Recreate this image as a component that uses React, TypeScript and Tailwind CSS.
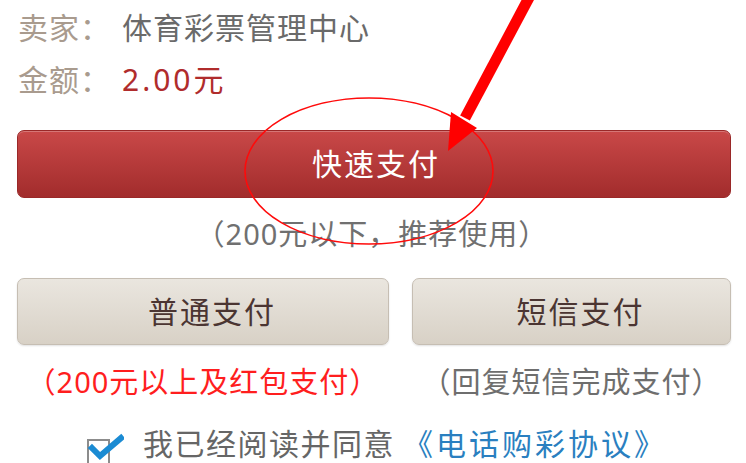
import React from "react";

const font = { fontFamily: '"Noto Sans", "Noto Sans CJK SC", sans-serif' };

export default function App() {
  return (
    <div
      className="relative w-[746px] h-[463px] overflow-hidden bg-white"
      style={font}
    >
      <div className="flex flex-col pl-[17px] pr-[15px]">
        <div className="mt-[13px] flex h-[30px] items-center text-[30px] leading-none tracking-[1px]">
          <span className="w-[105px] pl-[1px] text-[#a99b8e]">卖家：</span>
          <span className="text-[#6a6a6a]">体育彩票管理中心</span>
        </div>
        <div className="mt-[22px] flex h-[30px] items-center text-[30px] leading-none tracking-[1px]">
          <span className="w-[105px] pl-[1px] text-[#a99b8e]">金额：</span>
          <span className="text-[#b02c2c] tracking-[3px]">2.00元</span>
        </div>

        <button className="mt-[35px] flex h-[68px] w-full items-center justify-center rounded-[7px] border border-[#9a2828] bg-gradient-to-b from-[#c94848] to-[#a22c2c] pl-[4px] text-[30px] leading-none tracking-[2px] text-white shadow-[inset_0_1px_0_rgba(255,255,255,0.25)]">
          快速支付
        </button>

        <div className="mt-[20px] flex h-[30px] items-center justify-center pr-[4px] text-[29px] leading-none tracking-[1px] text-[#707070]">
          （200元以下，推荐使用）
        </div>

        <div className="mt-[30px] grid grid-cols-[372px_1fr] gap-[23px]">
          <button className="flex h-[67px] items-center justify-center rounded-[7px] border border-[#c6beb3] bg-gradient-to-b from-[#eae6df] to-[#d8d1c6] pl-[18px] text-[30px] leading-none tracking-[2px] text-[#4b3532] shadow-[0_1px_2px_rgba(0,0,0,0.12)]">
            普通支付
          </button>
          <button className="flex h-[67px] items-center justify-center rounded-[7px] border border-[#c6beb3] bg-gradient-to-b from-[#eae6df] to-[#d8d1c6] pl-[18px] text-[30px] leading-none tracking-[2px] text-[#4b3532] shadow-[0_1px_2px_rgba(0,0,0,0.12)]">
            短信支付
          </button>
        </div>

        <div className="mt-[21px] grid grid-cols-[372px_1fr] gap-[23px] text-[29px] leading-none tracking-[1px]">
          <div className="flex h-[30px] items-center justify-center text-[#ff1e1e]">
            （200元以上及红包支付）
          </div>
          <div className="flex h-[30px] items-center justify-center text-[#6e6e6e]">
            （回复短信完成支付）
          </div>
        </div>

        <div className="mt-[34px] flex h-[28px] items-center text-[30px] leading-[28px] tracking-[1px]">
          <svg
            width="38"
            height="34"
            viewBox="0 0 38 34"
            className="ml-[69px] mt-[12px] shrink-0"
          >
            <rect
              x="2"
              y="7"
              width="21"
              height="24"
              fill="white"
              stroke="#8c8c8c"
              strokeWidth="2"
            />
            <path
              d="M6 15 L14 23 L35 5"
              fill="none"
              stroke="#1b8bd3"
              strokeWidth="6"
              strokeLinecap="square"
              strokeLinejoin="miter"
            />
          </svg>
          <span className="ml-[19px] text-[#666666] tracking-[1.5px]">我已经阅读并同意</span>
          <span className="ml-[8px] text-[#2a7fc0] tracking-[3px]">《电话购彩协议》</span>
        </div>
      </div>

      <svg
        className="pointer-events-none absolute inset-0"
        width="746"
        height="463"
        viewBox="0 0 746 463"
      >
        <ellipse
          cx="369"
          cy="171"
          rx="124"
          ry="73"
          fill="none"
          stroke="#ff0a0a"
          strokeWidth="1.6"
        />
        <line
          x1="532"
          y1="-8"
          x2="465"
          y2="118"
          stroke="#ff0000"
          strokeWidth="11"
        />
        <polygon points="448,151 451,112 477,128" fill="#ff0000" />
      </svg>
    </div>
  );
}
